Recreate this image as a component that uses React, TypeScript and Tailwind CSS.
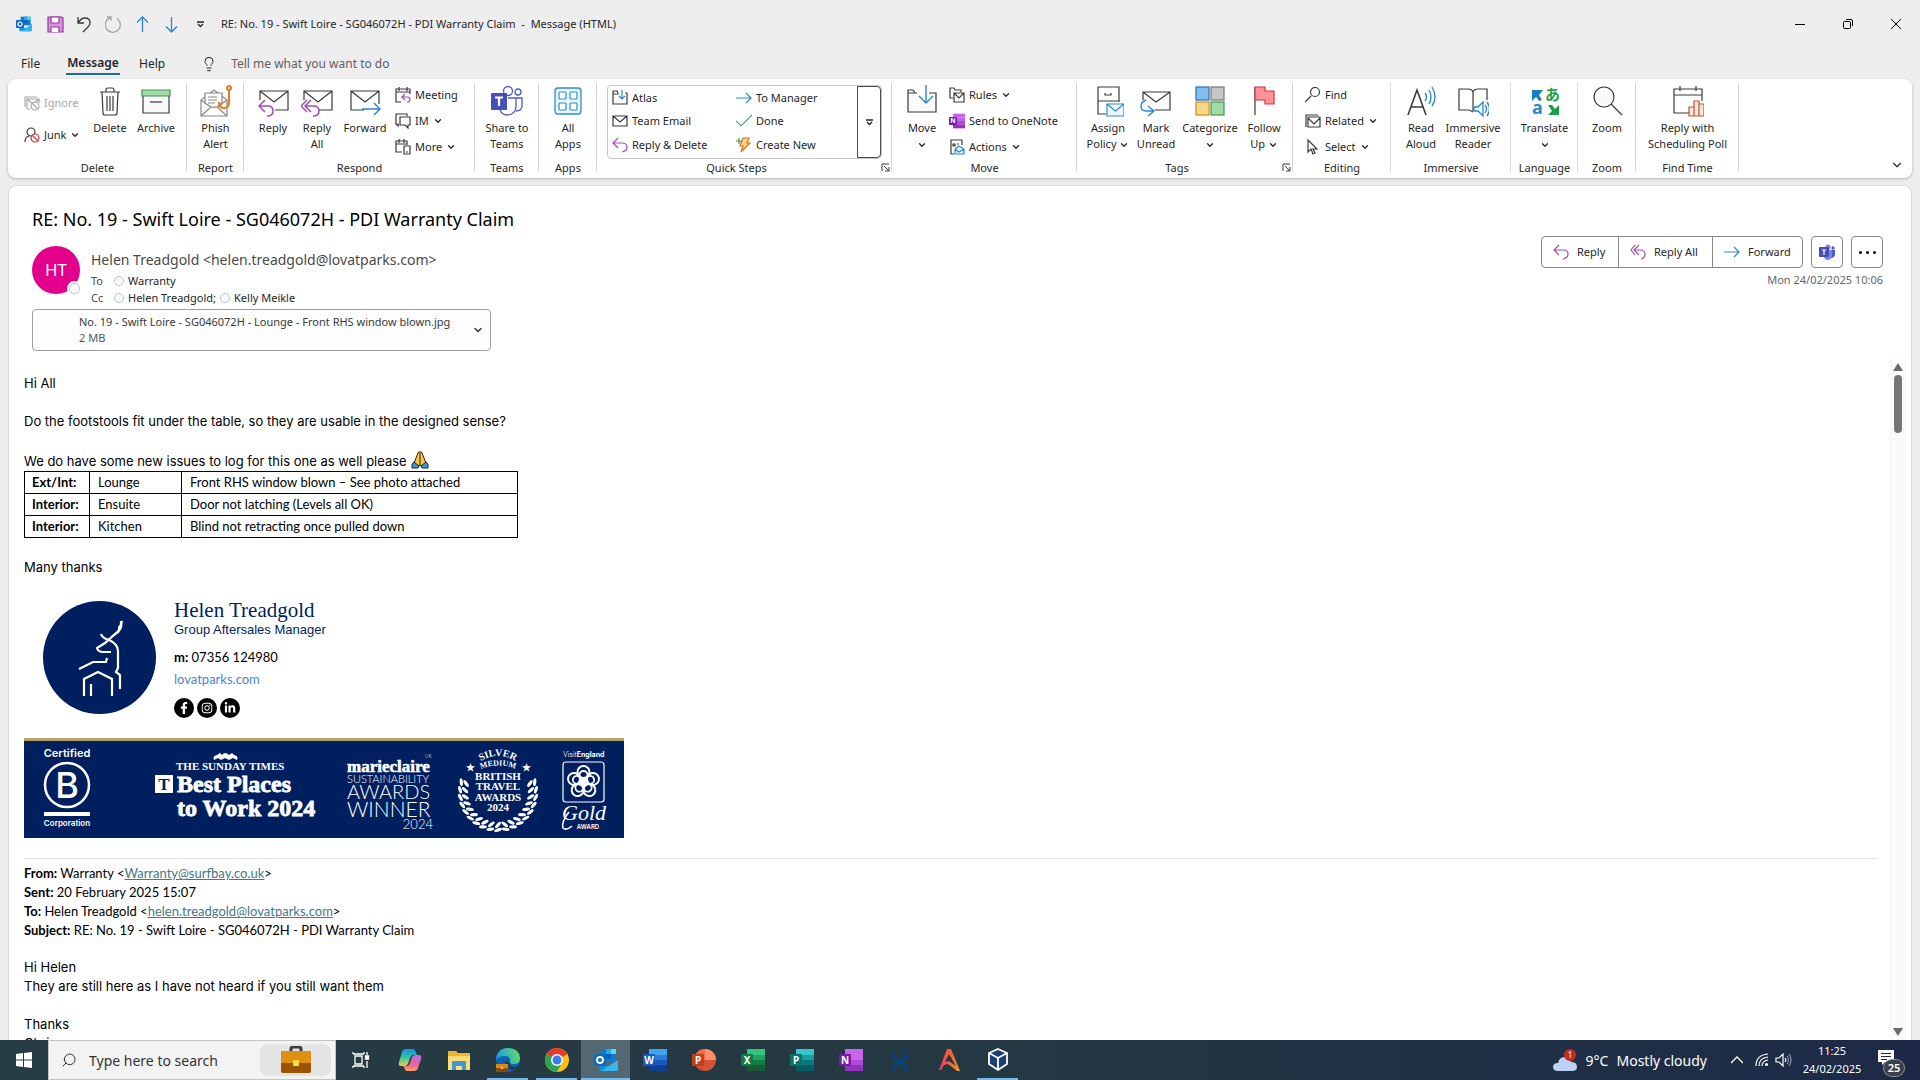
import React from 'react'
import { ChevronDown, Lightbulb, Search } from 'lucide-react'
import { FaFacebookF, FaInstagram, FaLinkedinIn } from 'react-icons/fa'

type IconProps = { className?: string }

const INK = "#3b3a39"
const BLUE = "#2b88d0"
const PURPLE = "#a04fae"

/* ---------- shared icon helpers ---------- */

function Svg({ size = 32, children, className = "" }: { size?: number; children: React.ReactNode; className?: string }) {
  return (
    <svg width={size} height={size} viewBox={`0 0 ${size} ${size}`} fill="none" stroke={INK} strokeWidth="1.2" className={`shrink-0 ${className}`} aria-hidden="true">
      {children}
    </svg>
  )
}

function Caret() {
  return <ChevronDown className="w-2.5 h-2.5 inline-block shrink-0" strokeWidth={3} />
}

const TrashIcon = () => (
  <Svg>
    <path d="M6 7h20M12 7V5q0-2 2-2h4q2 0 2 2v2M8 7l1 21q0 2 2 2h10q2 0 2-2l1-21M13 11v15M16 11v15M19 11v15" />
  </Svg>
)

const ArchiveIcon = () => (
  <Svg>
    <path d="M3 10v18h26V10" fill="#fafafa" />
    <path d="M2 5h28v6H2z" fill="#a3dba8" stroke="#3f8f55" />
    <path d="M10 17h12" />
  </Svg>
)

const PhishIcon = () => (
  <Svg>
    <g stroke="#8a8886">
      <path d="M1 15v16h26V15L14 5zM1 31l10-9h6l10 9M1 15l10 7M27 15l-10 7" fill="#fafafa" />
      <path d="M5 18V8h17v10l-5 4h-6z" fill="#fff" />
      <path d="M8 12h9M8 15h9M8 18h7" />
    </g>
    <circle cx="29" cy="3" r="2" stroke="#ee7623" strokeWidth="2" />
    <path d="M29 5v12q0 6-5 6t-5-5l3 2" stroke="#ee7623" strokeWidth="2" />
  </Svg>
)

const ReplyIcon = ({ all = false }: { all?: boolean }) => (
  <Svg>
    <path d="M3 15V6h28v19H18M3 6l14 11L31 6" />
    <path d={all ? "M10 15l-6 6 6 6M6 15l-6 6 6 6M4 21h8q6 0 6 5t-6 5" : "M8 15l-6 6 6 6M2 21h9q5 0 5 5t-6 5"} stroke={PURPLE} strokeWidth="1.5" />
  </Svg>
)

const ForwardIcon = () => (
  <Svg>
    <path d="M15 25H2V6h28v13M2 6l14 11L30 6" />
    <path d="M13 24h18M25 18l6 6-6 6" stroke={BLUE} strokeWidth="1.5" />
  </Svg>
)

const TeamsOutlineIcon = () => (
  <Svg>
    <g stroke="#5059c9" strokeWidth="1.3">
      <circle cx="17" cy="6" r="4.500" />
      <circle cx="27" cy="7" r="3" />
      <path d="M17 13h8v9q-1 8-9 8-5 0-7-5M25 13h6v8q0 5-6 5" />
    </g>
    <rect x="0" y="8" width="16" height="17" rx="1" fill="#464eb8" stroke="none" />
    <path d="M4 12.500h8M8 12.500V21" stroke="#fff" strokeWidth="2.200" />
  </Svg>
)

const AppsIcon = () => (
  <Svg>
    <rect x="3" y="3" width="26" height="26" rx="3" fill="#e8f4fc" stroke="#2f8fc5" strokeWidth="1.300" />
    {[[7, 7], [18, 7], [7, 18], [18, 18]].map(([x, y]) => (
      <rect key={`${x}-${y}`} x={x} y={y} width="7" height="7" rx="1" fill="#fff" stroke="#2f8fc5" />
    ))}
  </Svg>
)

const MoveIcon = () => (
  <Svg>
    <path d="M11 8h-2L7 5H2v22h28V8h-7M2 8h8" fill="#fafafa" />
    <path d="M20 0v18M13 11l7 7 7-7" stroke={BLUE} strokeWidth="1.400" />
  </Svg>
)

const PolicyIcon = () => (
  <Svg>
    <path d="M14 29H6V2h21v15M6 16h21M13 8v2h6V8" />
    <path d="M15 19h17v12H15zM15 19l8.500 7 8.500-7" fill="#eef7fd" stroke={BLUE} />
  </Svg>
)

const UnreadIcon = () => (
  <Svg>
    <path d="M3 15V7h27v18H15M3 7l13 10L30 7" fill="#fafafa" />
    <path d="M6 15q-5 2-5 6 0 5 5 5h7M8 21l6 5-6 5" stroke={BLUE} strokeWidth="1.400" fill="#fff" />
  </Svg>
)

const CategorizeIcon = () => (
  <Svg>
    <rect x="2" y="2" width="13" height="13" fill="#83beec" stroke="#2472b8" />
    <rect x="17" y="2" width="13" height="13" fill="#c8c6c4" stroke="#797775" />
    <rect x="2" y="17" width="13" height="13" fill="#ffd98a" stroke="#d08a1c" />
    <rect x="17" y="17" width="13" height="13" fill="#a3dba8" stroke="#3f9a55" />
  </Svg>
)

const FlagIcon = () => (
  <Svg>
    <path d="M7 2v28" />
    <path d="M7 2h10v4h9v13H17v-4H7z" fill="#ff9199" stroke="#d13438" />
  </Svg>
)

const ReadAloudIcon = () => (
  <Svg>
    <path d="M3 30L12 5l9 25M6 22h12" strokeWidth="1.600" />
    <path d="M20 8q3 4 0 8M24 5q4 7 0 14M27 2q6 10 0 19" stroke={BLUE} strokeWidth="1.400" />
  </Svg>
)

const ReaderIcon = () => (
  <Svg>
    <path d="M16 27q-3-2-5-2H2V4h9q4 0 5 3v19M16 7q1-3 5-3h9v11" />
    <path d="M17 22h4l5-5v14l-5-5h-4zM28 20q3 4 0 8M30 17q5 7 0 14" stroke={BLUE} strokeWidth="1.300" fill="#eef7fd" />
  </Svg>
)

const TranslateIcon = () => (
  <Svg className="overflow-visible">
    <g stroke="none">
      <path d="M3 5h11l-4 5 3 5-3 1-3-4-4 4z" fill="#1b7fc4" />
      <path d="M30 30H19l4-4-4-6h4l3 4 4-4z" fill="#1e9e4a" />
      <text x="3" y="29" fontSize="18" fontWeight="700" fill="#2b88d0" fontFamily="Noto Sans, sans-serif">a</text>
      <text x="16" y="15" fontSize="15" fontWeight="700" fill="#1e9e4a" fontFamily="Noto Sans CJK JP, sans-serif">あ</text>
    </g>
  </Svg>
)

const ZoomIcon = () => (
  <Svg>
    <circle cx="13" cy="12" r="10" fill="#fafafa" />
    <path d="M20 19l11 11" />
  </Svg>
)

const PollIcon = () => (
  <Svg>
    <path d="M17 28H2V4h28v12M2 10h28M8 1v5M24 1v5" />
    <path d="M17 22h5v9h-5zM22 16h5v15h-5zM27 19h5v12h-5z" fill="#fde7dc" stroke="#c8502a" />
  </Svg>
)

/* small 16px icons */

const IgnoreIcon = () => (
  <Svg size={16}>
    <g stroke="#a8a8a8">
      <path d="M1 12V2h12M3 14V4h12v4M3 4l6 5 6-5M3 14h3" />
      <circle cx="11" cy="11" r="4" fill="#fff" />
      <path d="M8 8l6 6" />
    </g>
  </Svg>
)

const JunkIcon = () => (
  <Svg size={16}>
    <circle cx="7" cy="5" r="4" />
    <path d="M1 15q0-5 4-6" />
    <circle cx="11" cy="11" r="4" fill="#fff" stroke="#d13438" />
    <path d="M8 8l6 6" stroke="#d13438" />
  </Svg>
)

const MeetingIcon = () => (
  <Svg size={16}>
    <path d="M6 15H1V2h14v5M1 5h14M4 0v4M12 0v4" />
    <path d="M10 7l-3 3 3 3M7 10h5q3 0 3 2.500T12 15" stroke={PURPLE} />
  </Svg>
)

const ImIcon = () => (
  <Svg size={16}>
    <path d="M4 11H3v2l-2-2V1h11v2M5 4h10v8h-2v3l-3-3H5z" />
  </Svg>
)

const MoreIcon = () => (
  <Svg size={16}>
    <path d="M7 13H1V2h11v4M1 5h11M4 0v4M9 0v4M9 7h6v8H9zM11 13h2" />
  </Svg>
)

const FolderDownIcon = () => (
  <Svg size={16}>
    <path d="M6 3L5 1H1v13h14V3h-2M1 4h6" />
    <path d="M10 0v9M7 6l3 3 3-3" stroke={BLUE} />
  </Svg>
)

const EnvelopeIcon = () => (
  <Svg size={16}>
    <path d="M1 3h14v10H1zM1 3l7 6 7-6" />
  </Svg>
)

const SmallReply = () => (
  <Svg size={16}>
    <path d="M6 1L1 6l5 5M1 6h9q5 0 5 4t-5 5" stroke={PURPLE} />
  </Svg>
)

const SmallReplyAll = () => (
  <Svg size={16}>
    <path d="M5 1L1 6l4 5M9 1L4 6l5 5M4 6h6q5 0 5 4t-4 5" stroke={PURPLE} />
  </Svg>
)

const ArrowRight = () => (
  <Svg size={16}>
    <path d="M0 8h15M10 3l5 5-5 5" stroke={BLUE} />
  </Svg>
)

const DoneIcon = () => (
  <Svg size={16}>
    <path d="M0 8l5 5L16 2" stroke="#4fa566" />
  </Svg>
)

const BoltIcon = () => (
  <Svg size={16}>
    <path d="M7 1h6l-2 5h3L5 15l2-6H4z" fill="#ffd08a" stroke="#d8731c" />
    <path d="M0 4h6M3 1v6" stroke="#3f9a55" />
  </Svg>
)

const RulesIcon = () => (
  <Svg size={16}>
    <path d="M4 11H1V1h4l1 2h6v2M5 6h10v9H5zM5 6l5 5 5-5" />
  </Svg>
)

const ActionsIcon = () => (
  <Svg size={16}>
    <path d="M5 15H2V1h11v5M4 5h2v2H4zM8 5h2" />
    <path d="M6 10l4-3 5 3v5H6zM6 10l4 3 5-3" stroke={BLUE} fill="#e6f3fc" />
  </Svg>
)

const FindIcon = () => (
  <Svg size={16}>
    <circle cx="10" cy="5" r="4.500" />
    <path d="M6 9l-6 6" />
  </Svg>
)

const RelatedIcon = () => (
  <Svg size={16}>
    <path d="M1 14V2h12M3 4h12v10H3zM3 5l6 6 6-6" />
  </Svg>
)

const SelectIcon = () => (
  <Svg size={16}>
    <path d="M3 1v12l3-3 2 5 2-1-2-4h4z" />
  </Svg>
)

/* ---------- Office tile used in the ribbon and the taskbar ---------- */

const tilePalettes = {
  W: ["#41a5ee", "#2b7cd3", "#185abd", "#103f91", "#185abd"],
  X: ["#33c481", "#21a366", "#107c41", "#185c37", "#107c41"],
  P: ["#37c6d0", "#1a9ba1", "#08777e", "#055c61", "#077568"],
  N: ["#ca64ea", "#ca64ea", "#ae4bd5", "#9332bf", "#7719aa"],
}

function OfficeTile({ letter, className = "w-6 h-6" }: { letter: "W" | "X" | "P" | "N"; className?: string }) {
  const [a, b, c, d, front] = tilePalettes[letter]
  return (
    <svg viewBox="0 0 24 24" className={`shrink-0 ${className}`} aria-hidden="true">
      <path d="M6 1h18v6H6z" fill={a} />
      <path d="M6 7h18v5H6z" fill={b} />
      <path d="M6 12h18v5H6z" fill={c} />
      <path d="M6 17h18v6H6z" fill={d} />
      <rect x="0" y="6" width="12" height="12" rx="1" fill={front} />
      <text x="6" y="15.500" textAnchor="middle" fontSize="10" fontWeight="700" fill="#fff" fontFamily="Noto Sans, sans-serif">{letter}</text>
    </svg>
  )
}

function OutlookTile({ className = "w-6 h-6" }: IconProps) {
  return (
    <svg viewBox="0 0 24 24" className={`shrink-0 ${className}`} aria-hidden="true">
      <path d="M7 1h15v13H7z" fill="#0f78d4" />
      <path d="M12 1h5v5h-5z" fill="#28a8ea" />
      <path d="M17 1h5v5h-5z" fill="#50d9ff" />
      <path d="M12 6h5v5h-5z" fill="#0364b8" />
      <path d="M5 12l10 7 9-7v9q0 2-2 2H7q-2 0-2-2z" fill="#1490df" />
      <path d="M24 12L7 23h15q2 0 2-2z" fill="#35b8f1" />
      <rect x="0" y="6" width="12" height="12" rx="1" fill="#0f6cbd" />
      <circle cx="6" cy="12" r="3" fill="none" stroke="#fff" strokeWidth="1.800" />
    </svg>
  )
}

function TeamsTile() {
  return (
    <svg viewBox="0 0 16 16" className="w-4 h-4" aria-hidden="true">
      <circle cx="9" cy="3" r="2.500" fill="#7b83eb" />
      <circle cx="14" cy="4" r="1.700" fill="#5059c9" />
      <path d="M11 6h5v5q-1 3-4 3z" fill="#5059c9" />
      <path d="M5 6h8v6q-1 4-4 4-4 0-4-4z" fill="#7b83eb" />
      <rect x="0" y="3" width="10" height="10" rx="1" fill="#464eb8" />
      <path d="M3 6h4M5 6v5" stroke="#fff" strokeWidth="1.200" />
    </svg>
  )
}

/* ---------- ribbon ---------- */

function Group({ label, className, children, launcher = false }: { label: string; className: string; children: React.ReactNode; launcher?: boolean }) {
  return (
    <section className={`relative flex flex-col shrink-0 ${className}`}>
      <div className="flex h-[81px] pt-1.5">{children}</div>
      <h2 className={`text-center leading-4 ${launcher ? "pr-4" : ""}`}>{label}</h2>
      {launcher && (
        <button aria-label={`${label} options`} className="absolute right-0.5 bottom-1.5">
          <svg width="9" height="9" viewBox="0 0 9 9" fill="none" stroke={INK} aria-hidden="true">
            <path d="M1 8V1h7M3 3l5 5M8 4v4H4" />
          </svg>
        </button>
      )}
      <span className="absolute right-0 top-1 bottom-1.5 w-px bg-[#d6d6d6]" />
    </section>
  )
}

function BigButton({ icon, lines, caret = false, className = "w-11" }: { icon: React.ReactNode; lines: string[]; caret?: boolean; className?: string }) {
  return (
    <button className={`flex flex-col items-center shrink-0 h-[72px] ${className}`}>
      {icon}
      <span className="mt-[3px] leading-4 whitespace-nowrap text-center">
        {lines[0]}
        <br />
        {lines[1]}
        {caret && <> <Caret /></>}
      </span>
    </button>
  )
}

function SmallButton({ icon, text, caret = false, disabled = false }: { icon: React.ReactNode; text: string; caret?: boolean; disabled?: boolean }) {
  return (
    <button disabled={disabled} className="flex items-center gap-1 h-5 leading-5 whitespace-nowrap disabled:text-[#a8a8a8]">
      {icon} {text} {caret && <Caret />}
    </button>
  )
}

const quickSteps = [
  { text: "Atlas", icon: <FolderDownIcon /> },
  { text: "To Manager", icon: <ArrowRight /> },
  { text: "Team Email", icon: <EnvelopeIcon /> },
  { text: "Done", icon: <DoneIcon /> },
  { text: "Reply & Delete", icon: <SmallReply /> },
  { text: "Create New", icon: <BoltIcon /> },
]

function MenuGlyph() {
  return (
    <svg width="9" height="7" viewBox="0 0 9 7" fill="none" stroke="currentColor" strokeWidth="1.300" aria-hidden="true">
      <path d="M1 1h7M2 3l2.500 2.500L7 3" />
    </svg>
  )
}

function Ribbon() {
  return (
    <div className="mx-2 flex rounded-lg bg-white h-[99px] shadow-[0_1px_3px_rgba(0,0,0,0.25)] text-[11px] text-[#262626]">
      <Group label="Delete" className="w-[179px]">
        <div className="flex flex-col gap-3 pl-4 pt-2 w-20">
          <SmallButton icon={<IgnoreIcon />} text="Ignore" disabled />
          <SmallButton icon={<JunkIcon />} text="Junk" caret />
        </div>
        <BigButton icon={<TrashIcon />} lines={["Delete"]} />
        <BigButton icon={<ArchiveIcon />} lines={["Archive"]} className="w-12" />
      </Group>
      <Group label="Report" className="w-[57px]">
        <BigButton icon={<PhishIcon />} lines={["Phish", "Alert"]} className="w-full" />
      </Group>
      <Group label="Respond" className="w-[231px]">
        <div className="flex pl-[7px]">
          <BigButton icon={<ReplyIcon />} lines={["Reply"]} />
          <BigButton icon={<ReplyIcon all />} lines={["Reply", "All"]} />
          <BigButton icon={<ForwardIcon />} lines={["Forward"]} className="w-13" />
        </div>
        <div className="flex flex-col gap-1.5 pl-1">
          <SmallButton icon={<MeetingIcon />} text="Meeting" />
          <SmallButton icon={<ImIcon />} text="IM" caret />
          <SmallButton icon={<MoreIcon />} text="More" caret />
        </div>
      </Group>
      <Group label="Teams" className="w-16">
        <BigButton icon={<TeamsOutlineIcon />} lines={["Share to", "Teams"]} className="w-full" />
      </Group>
      <Group label="Apps" className="w-[58px]">
        <BigButton icon={<AppsIcon />} lines={["All", "Apps"]} className="w-full" />
      </Group>
      <Group label="Quick Steps" className="w-[295px]" launcher>
        <div className="ml-2.5 flex w-[275px] h-[74px] rounded border border-[#c8c6c4]">
          <div className="grid grid-cols-[124px_1fr] flex-1 pl-1 pt-0.5">
            {quickSteps.map((step) => (
              <SmallButton key={step.text} icon={step.icon} text={step.text} />
            ))}
          </div>
          <button aria-label="More quick steps" className="flex items-center justify-center w-6 rounded-r border border-[#4a4a4a]">
            <MenuGlyph />
          </button>
        </div>
      </Group>
      <Group label="Move" className="w-[185px]">
        <div className="flex pl-2">
          <BigButton icon={<MoveIcon />} lines={["Move"]} caret />
        </div>
        <div className="flex flex-col gap-1.5 pl-[5px]">
          <SmallButton icon={<RulesIcon />} text="Rules" caret />
          <SmallButton icon={<OfficeTile letter="N" className="w-4 h-4" />} text="Send to OneNote" />
          <SmallButton icon={<ActionsIcon />} text="Actions" caret />
        </div>
      </Group>
      <Group label="Tags" className="w-[216px]" launcher>
        <div className="flex pl-[7px]">
          <BigButton icon={<PolicyIcon />} lines={["Assign", "Policy"]} caret className="w-12" />
          <BigButton icon={<UnreadIcon />} lines={["Mark", "Unread"]} className="w-12" />
          <BigButton icon={<CategorizeIcon />} lines={["Categorize"]} caret className="w-15" />
          <BigButton icon={<FlagIcon />} lines={["Follow", "Up"]} caret className="w-12" />
        </div>
      </Group>
      <Group label="Editing" className="w-[98px]">
        <div className="flex flex-col gap-1.5 pl-3">
          <SmallButton icon={<FindIcon />} text="Find" />
          <SmallButton icon={<RelatedIcon />} text="Related" caret />
          <SmallButton icon={<SelectIcon />} text="Select" caret />
        </div>
      </Group>
      <Group label="Immersive" className="w-[120px]">
        <div className="flex pl-2">
          <BigButton icon={<ReadAloudIcon />} lines={["Read", "Aloud"]} />
          <BigButton icon={<ReaderIcon />} lines={["Immersive", "Reader"]} className="w-15" />
        </div>
      </Group>
      <Group label="Language" className="w-[67px]">
        <BigButton icon={<TranslateIcon />} lines={["Translate"]} caret className="w-full" />
      </Group>
      <Group label="Zoom" className="w-[58px]">
        <BigButton icon={<ZoomIcon />} lines={["Zoom"]} className="w-full" />
      </Group>
      <Group label="Find Time" className="w-[103px]">
        <BigButton icon={<PollIcon />} lines={["Reply with", "Scheduling Poll"]} className="w-full" />
      </Group>
      <div className="flex flex-1 items-end justify-end pr-2 pb-1.5">
        <button aria-label="Collapse the ribbon">
          <ChevronDown className="w-3.5 h-3.5" />
        </button>
      </div>
    </div>
  )
}

/* ---------- title bar and tabs ---------- */

function TitleBar() {
  return (
    <header className="flex items-center h-12 pl-4 text-[#262626]">
      <OutlookTile className="w-4 h-4" />
      <div className="flex items-center gap-3 pl-[15px]">
        <button aria-label="Save">
          <svg width="17" height="17" viewBox="0 0 17 17" fill="#dd8fe0" stroke="#8f3a99" strokeWidth="1.200" aria-hidden="true">
            <path d="M1 1h14l1 1v14H1z" />
            <path d="M4 1h8v6H4zM4 16v-5h8v5" fill="#fff" />
          </svg>
        </button>
        <button aria-label="Undo">
          <svg width="17" height="17" viewBox="0 0 17 17" fill="none" stroke={INK} strokeWidth="1.300" aria-hidden="true">
            <path d="M2 1v6h6M2 7q3-5 7-5 5 0 5 5 0 2-2 4l-5 5" />
          </svg>
        </button>
        <button aria-label="Redo" disabled>
          <svg width="17" height="17" viewBox="0 0 17 17" fill="none" stroke="#a8a8a8" strokeWidth="1.300" aria-hidden="true">
            <path d="M2 1h4v4M6 1.500a7.500 7.500 0 1 0 6 1" />
          </svg>
        </button>
        <button aria-label="Previous item">
          <svg width="17" height="17" viewBox="0 0 17 17" fill="none" stroke={BLUE} strokeWidth="1.300" aria-hidden="true">
            <path d="M8.500 16V1M3 6.500L8.500 1 14 6.500" />
          </svg>
        </button>
        <button aria-label="Next item">
          <svg width="17" height="17" viewBox="0 0 17 17" fill="none" stroke={BLUE} strokeWidth="1.300" aria-hidden="true">
            <path d="M8.500 1v15M3 10.500L8.500 16l5.500-5.500" />
          </svg>
        </button>
        <button aria-label="Customise toolbar" className="pl-1">
          <MenuGlyph />
        </button>
      </div>
      <h1 className="pl-4 text-[11px] whitespace-pre">RE: No. 19 - Swift Loire - SG046072H - PDI Warranty Claim  -  Message (HTML)</h1>
      <div className="ml-auto flex">
        <button aria-label="Minimise" className="flex items-center justify-center w-12 h-12">
          <span className="w-2.5 h-px bg-black" />
        </button>
        <button aria-label="Restore" className="flex items-center justify-center w-12 h-12">
          <svg width="10" height="10" viewBox="0 0 10 10" fill="none" stroke="#000" aria-hidden="true">
            <rect x="0.500" y="2.500" width="7" height="7" rx="1" />
            <path d="M3 0.500h5q1.500 0 1.500 1.500v5" />
          </svg>
        </button>
        <button aria-label="Close" className="flex items-center justify-center w-12 h-12">
          <svg width="10" height="10" viewBox="0 0 10 10" stroke="#000" aria-hidden="true">
            <path d="M0 0l10 10M10 0L0 10" />
          </svg>
        </button>
      </div>
    </header>
  )
}

function Tabs() {
  return (
    <nav className="flex items-center h-[31px] pl-[21px] text-[12px] text-[#262626]">
      <button className="w-[45px] text-left">File</button>
      <button className="w-[54px] h-[23px] border-b-2 border-[#2268a8] font-semibold text-[12px] leading-[21px]">Message</button>
      <button className="pl-[19px]">Help</button>
      <label className="flex flex-1 items-center pl-9">
        <Lightbulb className="w-4 h-4" strokeWidth={1.500} />
        <input type="text" aria-label="Tell me what you want to do" placeholder="Tell me what you want to do" className="ml-3.5 w-60 bg-transparent outline-none placeholder:text-[#5f5f5f]" />
      </label>
    </nav>
  )
}

/* ---------- message ---------- */

function Presence() {
  return <span className="inline-block w-2.5 h-2.5 rounded-full border border-[#a9c9d4] bg-white shrink-0" />
}

function MessageHeader() {
  return (
    <div className="pl-[23px] pr-7 pt-[19px]">
      <h2 className="text-[18px] leading-7 text-black">RE: No. 19 - Swift Loire - SG046072H - PDI Warranty Claim</h2>
      <div className="flex justify-between pt-[7px]">
        <div className="flex pt-1">
          <div className="relative mt-0.5 w-12 h-12 shrink-0">
            <div className="flex items-center justify-center w-12 h-12 rounded-full bg-[#e3008c] text-white text-[17px]">HT</div>
            <span className="absolute -right-0.5 -bottom-0.5 w-[15px] h-[15px] rounded-full bg-white border-2 border-white">
              <span className="block w-full h-full rounded-full border border-[#a9c9d4]" />
            </span>
          </div>
          <div className="pl-[11px] pt-1 text-[#4a4a4a]">
            <p className="text-[14px] leading-6">Helen Treadgold &lt;helen.treadgold@lovatparks.com&gt;</p>
            <div className="text-[11px] leading-[17px]">
              <p className="flex items-center gap-1">
                <span className="w-[19px]">To</span>
                <Presence /> <span className="text-[#262626]">Warranty</span>
              </p>
              <p className="flex items-center gap-1">
                <span className="w-[19px]">Cc</span>
                <Presence /> <span className="text-[#262626]">Helen Treadgold;</span>
                <Presence /> <span className="text-[#262626]">Kelly Meikle</span>
              </p>
            </div>
          </div>
        </div>
        <div className="text-right text-[11px] -mt-1">
          <div className="flex gap-2 h-8">
            <div className="flex rounded border border-[#8a8886] divide-x divide-[#8a8886] text-[#262626]">
              <button className="flex items-center gap-2 w-[77px] pl-[11px]"><SmallReply /> Reply</button>
              <button className="flex items-center gap-2 w-[94px] pl-[11px]"><SmallReplyAll /> Reply All</button>
              <button className="flex items-center gap-2 w-[89px] pl-[11px]"><ArrowRight /> Forward</button>
            </div>
            <button aria-label="Share to Teams" className="flex items-center justify-center w-8 rounded border border-[#8a8886]"><TeamsTile /></button>
            <button aria-label="More actions" className="flex items-center justify-center gap-1 w-8 rounded border border-[#8a8886]">
              <span className="w-[3px] h-[3px] rounded-full bg-black" />
              <span className="w-[3px] h-[3px] rounded-full bg-black" />
              <span className="w-[3px] h-[3px] rounded-full bg-black" />
            </button>
          </div>
          <p className="pt-1 leading-4 text-[#666]">Mon 24/02/2025 10:06</p>
        </div>
      </div>
      <button className="mt-[3px] flex items-center w-[459px] h-[42px] rounded border border-[#a19f9d] bg-[#fdfdfd] pl-[46px] text-left text-[11px] leading-4 text-[#3b3a39]">
        <span className="flex-1 whitespace-nowrap">
          No. 19 - Swift Loire - SG046072H - Lounge - Front RHS window blown.jpg
          <br />
          <span className="text-[#555]">2 MB</span>
        </span>
        <ChevronDown className="w-3 h-3 mr-1.5" strokeWidth={3} />
      </button>
    </div>
  )
}

const issues = [
  { place: "Ext/Int:", room: "Lounge", note: "Front RHS window blown – See photo attached" },
  { place: "Interior:", room: "Ensuite", note: "Door not latching (Levels all OK)" },
  { place: "Interior:", room: "Kitchen", note: "Blind not retracting once pulled down" },
]

function PrayIcon() {
  return (
    <svg width="18" height="18" viewBox="0 0 18 18" className="inline-block align-text-bottom ml-1" role="img" aria-label="Folded hands">
      <path d="M8 1q-1 0-1 1L3 12l3 4 3-2 3 2 3-4-4-10q0-1-1-1z" fill="#ffc83d" stroke="#222" />
      <path d="M9 2v12" stroke="#222" />
      <path d="M3 11l5 4-1 2H1v-4zM15 11l-5 4 1 2h6v-4z" fill="#3a95d8" stroke="#222" />
    </svg>
  )
}

function StagLogo() {
  return (
    <svg width="113" height="113" viewBox="0 0 113 113" role="img" aria-label="Lovat Parks" className="shrink-0">
      <circle cx="56.500" cy="56.500" r="56.500" fill="#001f5f" />
      <g fill="none" stroke="#fff" strokeWidth="2.200">
        <path d="M78 20q1 9-7 14l-9 8-8 5q1 4 6 4h8" />
        <path d="M58 33q1 4 8 6 9 4 9 11v17l-2 4 4 3v14" />
        <path d="M64 57l-1 4H50l-14 7" />
        <path d="M41 95V78l14-7 14 7v17M48 83v12" />
      </g>
      <path d="M75 26l5-7-1 8-4 6z" fill="#fff" />
    </svg>
  )
}

/* laurel leaves run round the lower part of the circle */
const laurel = Array.from({ length: 19 }, (_, i) => -15 + i * (210 / 18))

function AwardsBanner() {
  return (
    <svg viewBox="0 0 600 100" width="600" height="100" fill="#fff" role="img" aria-label="Awards" className="block">
      <rect width="600" height="100" fill="#001f5f" />
      <rect width="600" height="3" fill="#b3a36a" />
      <g fontFamily="Inter, sans-serif" fontWeight="600" fontSize="11" textAnchor="middle">
        <text x="43" y="19">Certified</text>
        <text x="43" y="88" fontSize="8">Corporation</text>
      </g>
      <circle cx="43" cy="47" r="22" fill="none" stroke="#fff" strokeWidth="2.500" />
      <text x="43" y="60" textAnchor="middle" fontFamily="Inter, sans-serif" fontSize="36" fontWeight="500">B</text>
      <rect x="20" y="74" width="46" height="4" />

      <path d="M190 22q-2-4 3-5l3-2 2 2q3-4 7 0l3-2 2 2q5 1 3 5l-4-2-4 2-4-2-4 2-3-2z" />
      <g fontFamily="Liberation Serif, serif" fontWeight="700">
        <text x="152" y="32" fontSize="11">THE SUNDAY TIMES</text>
        <rect x="131" y="37" width="18" height="18" />
        <text x="140" y="52" fontSize="17" textAnchor="middle" fill="#001f5f">T</text>
        <text x="153" y="54" fontSize="24" stroke="#fff" strokeWidth="0.800">Best Places</text>
        <text x="153" y="78" fontSize="24" stroke="#fff" strokeWidth="0.800">to Work 2024</text>
        <text x="323" y="34" fontSize="17" stroke="#fff" strokeWidth="0.500">marieclaire</text>
      </g>
      <g fontFamily="Lato, sans-serif" fontWeight="300">
        <text x="401" y="20" fontSize="5">UK</text>
        <text x="323" y="45" fontSize="11">SUSTAINABILITY</text>
        <text x="323" y="61" fontSize="20">AWARDS</text>
        <text x="323" y="79" fontSize="21">WINNER</text>
        <text x="409" y="91" fontSize="13" textAnchor="end">2024</text>
      </g>

      <path id="silver-arc" d="M451 27q23-18 46 0" fill="none" />
      <path id="medium-arc" d="M454 32q20-9 40 0" fill="none" />
      <g fontFamily="Liberation Serif, serif" fontWeight="700" textAnchor="middle" fontSize="10">
        <text fontSize="10"><textPath href="#silver-arc" startOffset="50%">SILVER</textPath></text>
        <text fontSize="8"><textPath href="#medium-arc" startOffset="50%">MEDIUM</textPath></text>
        <text x="446" y="33">★</text>
        <text x="502" y="33">★</text>
        <text x="474" y="42" fontSize="11">BRITISH</text>
        <text x="474" y="52" fontSize="11">TRAVEL</text>
        <text x="474" y="63" fontSize="11">AWARDS</text>
        <text x="474" y="73" fontSize="11">2024</text>
      </g>
      {laurel.map((a) => (
        <g key={a} transform={`translate(474 54) rotate(${a})`}>
          <ellipse cx="33" cy="0" rx="4" ry="1.600" transform={`rotate(${a < 90 ? -40 : 40} 33 0)`} />
          <ellipse cx="38" cy="0" rx="4" ry="1.600" transform={`rotate(${a < 90 ? -70 : 70} 38 0)`} />
        </g>
      ))}

      <text x="539" y="19" fontFamily="Inter, sans-serif" fontSize="7" fontWeight="300">Visit<tspan fontWeight="700">England</tspan></text>
      <rect x="539" y="24" width="41" height="40" rx="3" fill="none" stroke="#fff" strokeWidth="1.200" />
      {[0, 72, 144, 216, 288].map((a) => (
        <g key={a} transform={`rotate(${a} 559.5 44)`} stroke="#fff" fill="none">
          <circle cx="559.500" cy="34" r="6" strokeWidth="2" />
          <circle cx="559.500" cy="37" r="4" strokeWidth="1.800" />
        </g>
      ))}
      <circle cx="559.500" cy="44" r="3" />
      <text x="560" y="82" textAnchor="middle" fontFamily="Liberation Serif, serif" fontStyle="italic" fontSize="22">Gold</text>
      <path d="M545 74q-8 10-6 16 3 3 9-2" fill="none" stroke="#fff" strokeWidth="1.500" />
      <text x="564" y="91" textAnchor="middle" fontFamily="Inter, sans-serif" fontSize="6" fontWeight="600">AWARD</text>
    </svg>
  )
}

function Signature() {
  return (
    <div className="flex pt-6 pl-[19px]">
      <StagLogo />
      <div className="pl-[18px] text-[#001f5f]">
        <p className="font-['Liberation_Serif',serif] text-[21px] leading-[18px]">Helen Treadgold</p>
        <p className="pt-[3px] font-['Liberation_Sans',sans-serif] text-[13px] leading-4">Group Aftersales Manager</p>
        <p className="pt-2 font-[Lato,sans-serif] text-[13px] leading-[22px] text-black"><b>m:</b> 07356 124980</p>
        <p className="font-[Lato,sans-serif] text-[13px] leading-[22px]">
          <a href="#lovatparks" className="text-[#4a86d8]">lovatparks.com</a>
        </p>
        <div className="flex gap-[3px] pt-2 text-white">
          <a href="#facebook" aria-label="Facebook" className="flex items-center justify-center w-5 h-5 rounded-full bg-black"><FaFacebookF className="w-3 h-3" /></a>
          <a href="#instagram" aria-label="Instagram" className="flex items-center justify-center w-5 h-5 rounded-full bg-black"><FaInstagram className="w-3 h-3" /></a>
          <a href="#linkedin" aria-label="LinkedIn" className="flex items-center justify-center w-5 h-5 rounded-full bg-black"><FaLinkedinIn className="w-3 h-3" /></a>
        </div>
      </div>
    </div>
  )
}

function MessageBody() {
  return (
    <article className="flex-1 overflow-hidden pt-[15px] pl-[15px] pr-[11px] font-[Inter,sans-serif] text-[13px] leading-[19px] text-black">
      <p>Hi All</p>
      <p className="pt-[19px]">Do the footstools fit under the table, so they are usable in the designed sense?</p>
      <p className="pt-5 h-10">We do have some new issues to log for this one as well please<PrayIcon /></p>
      <table className="border-collapse w-[494px] font-[Lato,sans-serif] text-[13px] leading-[21px]">
        <tbody>
          {issues.map((row) => (
            <tr key={row.note}>
              <th scope="row" className="border border-black w-[65px] pl-[7px] text-left">{row.place}</th>
              <td className="border border-black w-[92px] pl-2">{row.room}</td>
              <td className="border border-black pl-2">{row.note}</td>
            </tr>
          ))}
        </tbody>
      </table>
      <p className="pt-5">Many thanks</p>
      <Signature />
      <div className="pt-5"><AwardsBanner /></div>
      <hr className="mt-5 border-[#e1e1e1]" />
      <div className="pt-[5px] font-[Lato,sans-serif] text-[13px]">
        <p><b>From:</b> Warranty &lt;<a href="#warranty" className="underline text-[#467886]">Warranty@surfbay.co.uk</a>&gt;</p>
        <p><b>Sent:</b> 20 February 2025 15:07</p>
        <p><b>To:</b> Helen Treadgold &lt;<a href="#helen" className="underline text-[#467886]">helen.treadgold@lovatparks.com</a>&gt;</p>
        <p><b>Subject:</b> RE: No. 19 - Swift Loire - SG046072H - PDI Warranty Claim</p>
      </div>
      <p className="pt-[18px]">Hi Helen</p>
      <p>They are still here as I have not heard if you still want them</p>
      <p className="pt-[19px]">Thanks</p>
      <p>Chris</p>
    </article>
  )
}

function ScrollBar() {
  return (
    <div className="flex flex-col items-center w-[17px] mr-[5px] py-1 rounded bg-[#fafafa]">
      <svg width="10" height="8" viewBox="0 0 10 8" className="shrink-0" aria-hidden="true"><path d="M5 0l5 8H0z" fill="#6b6b6b" /></svg>
      <span className="mt-1 w-2 h-[58px] shrink-0 rounded-full bg-[#767676]" />
      <svg width="10" height="8" viewBox="0 0 10 8" className="mt-auto shrink-0" aria-hidden="true"><path d="M5 8l5-8H0z" fill="#6b6b6b" /></svg>
    </div>
  )
}

/* ---------- taskbar ---------- */

const BriefcaseArt = ({ className = "" }: IconProps) => (
  <svg viewBox="0 0 32 28" className={className} aria-hidden="true">
    <path d="M11 6V3q0-2 2-2h6q2 0 2 2v3" fill="none" stroke="#3b3b3b" strokeWidth="3" />
    <rect x="1" y="5" width="30" height="22" rx="2" fill="#9a5400" />
    <path d="M1 7q0-2 2-2h26q2 0 2 2v10H1z" fill="#e08f10" />
    <rect x="13" y="14" width="6" height="6" rx="1" fill="#ffd84a" />
  </svg>
)

const CopilotIcon = () => (
  <svg viewBox="0 0 24 24" className="w-6 h-6" aria-hidden="true">
    <defs>
      <linearGradient id="cop-a" x1="0" y1="0" x2="0" y2="1"><stop offset="0" stopColor="#1b8fe8" /><stop offset="0.500" stopColor="#35c3a0" /><stop offset="1" stopColor="#e8d23c" /></linearGradient>
      <linearGradient id="cop-b" x1="0" y1="0" x2="0" y2="1"><stop offset="0" stopColor="#b66cf0" /><stop offset="0.600" stopColor="#f0609a" /><stop offset="1" stopColor="#f8a45c" /></linearGradient>
    </defs>
    <path d="M8 1h7q2 0 3 4l1 2h-4q-2 0-3 3l-2 6q-1 2-4 2H3q-3 0-2-4L4 4q1-3 4-3z" fill="url(#cop-a)" />
    <path d="M16 23H9q-2 0-3-4l-1-1h4q2 0 3-3l2-6q1-2 4-2h3q3 0 2 4l-3 9q-1 3-4 3z" fill="url(#cop-b)" />
  </svg>
)

const ExplorerIcon = () => (
  <svg viewBox="0 0 24 24" className="w-6 h-6" aria-hidden="true">
    <path d="M1 3h8l2 2h12v17H1z" fill="#f0b429" />
    <path d="M1 8h22v14H1z" fill="#ffdc74" />
    <path d="M5 22v-8q0-1 1-1h12q1 0 1 1v8h-4v-4H9v4z" fill="#3c97dc" />
  </svg>
)

const EdgeIcon = () => (
  <svg viewBox="0 0 26 26" className="w-[26px] h-[26px]" aria-hidden="true">
    <defs>
      <linearGradient id="edge-g" x1="0" y1="0.500" x2="1" y2="0.300"><stop offset="0" stopColor="#1b9be0" /><stop offset="1" stopColor="#5fdc6a" /></linearGradient>
    </defs>
    <circle cx="13" cy="13" r="12" fill="#0f62b8" />
    <path d="M1 13Q2 1 13 1t12 10q0 6-6 6-4 0-4-2 1-6-5-6-6 0-9 4z" fill="url(#edge-g)" />
    <path d="M10 14q0 8 8 9 4-1 6-4-10 3-10-4z" fill="#263b44" />
    <path d="M1 17h12v8H1z" fill="#d98a1a" />
    <path d="M1 21h12v4H1z" fill="#8e4b04" />
    <path d="M6 20h2v2H6z" fill="#ffd84a" />
  </svg>
)

const ChromeIcon = () => (
  <svg viewBox="0 0 24 24" className="w-6 h-6" aria-hidden="true">
    <circle cx="12" cy="12" r="12" fill="#fbc116" />
    <path d="M12 12L1.600 6A12 12 0 0 1 22.400 6z" fill="#e33b2e" />
    <path d="M12 12L1.600 6A12 12 0 0 0 12 24l5-9z" fill="#2da44e" />
    <circle cx="12" cy="12" r="6" fill="#fff" />
    <circle cx="12" cy="12" r="4.500" fill="#3f7de8" />
  </svg>
)

const PowerPointIcon = () => (
  <svg viewBox="0 0 24 24" className="w-6 h-6" aria-hidden="true">
    <circle cx="13" cy="12" r="11" fill="#d35230" />
    <path d="M13 1a11 11 0 0 1 11 11H13z" fill="#ff8f6b" />
    <path d="M13 1a11 11 0 0 0-11 11h11z" fill="#ed6c47" />
    <rect x="0" y="6" width="12" height="12" rx="1" fill="#c43e1c" />
    <text x="6" y="15.500" textAnchor="middle" fontSize="10" fontWeight="700" fill="#fff" fontFamily="Noto Sans, sans-serif">P</text>
  </svg>
)

const FigureIcon = () => (
  <svg viewBox="0 0 24 24" className="w-6 h-6" fill="none" stroke="#123f73" strokeWidth="4" aria-hidden="true">
    <path d="M4 7l8 7 8-7M6 23q0-7 6-9 6 2 6 9" />
    <path d="M4 3h2M11 2h2M18 3h2" strokeWidth="3" />
  </svg>
)

const RedAIcon = () => (
  <svg viewBox="0 0 24 24" className="w-6 h-6" aria-hidden="true">
    <defs>
      <linearGradient id="red-a" x1="0" y1="0" x2="1" y2="0"><stop offset="0" stopColor="#e83e6c" /><stop offset="0.600" stopColor="#f2662c" /><stop offset="1" stopColor="#f5a12c" /></linearGradient>
    </defs>
    <path d="M10 1h4l9 22h-3l-9-7-4 1-3 5H2zM12 6L8 14l4-1 7 5z" fillRule="evenodd" fill="url(#red-a)" />
  </svg>
)

const BoxIcon = () => (
  <svg viewBox="0 0 24 24" className="w-6 h-6" fill="#1c3f70" stroke="#fff" strokeWidth="1.800" aria-hidden="true">
    <path d="M12 1l9 4v11l-9 6-9-6V5z" />
    <path d="M3 5l9 5 9-5M12 10v12" />
  </svg>
)

const TaskViewIcon = () => (
  <svg viewBox="0 0 18 18" className="w-[18px] h-[18px]" fill="none" stroke="#fff" strokeWidth="1.300" aria-hidden="true">
    <path d="M1 3h11M1 15h11M3 5h7v8H3zM15 1v3M15 10v7" />
    <path d="M13.500 5h3v3h-3z" fill="#fff" />
    <path d="M1 1v2M12 1v2M1 15v2M12 15v2" />
  </svg>
)

const pinned = [
  { name: "Task View", icon: <TaskViewIcon /> },
  { name: "Copilot", icon: <CopilotIcon /> },
  { name: "File Explorer", icon: <ExplorerIcon /> },
  { name: "Edge", icon: <EdgeIcon />, open: true },
  { name: "Chrome", icon: <ChromeIcon />, open: true },
  { name: "Outlook", icon: <OutlookTile />, open: true, active: true },
  { name: "Word", icon: <OfficeTile letter="W" /> },
  { name: "PowerPoint", icon: <PowerPointIcon /> },
  { name: "Excel", icon: <OfficeTile letter="X" /> },
  { name: "Publisher", icon: <OfficeTile letter="P" /> },
  { name: "OneNote", icon: <OfficeTile letter="N" /> },
  { name: "Assistant", icon: <FigureIcon /> },
  { name: "Access client", icon: <RedAIcon /> },
  { name: "VirtualBox", icon: <BoxIcon />, open: true },
]

function Taskbar() {
  return (
    <footer className="flex items-center h-10 shrink-0 bg-linear-to-r from-[#263c45] via-[#243842] to-[#1d2947] text-white">
      <button aria-label="Start" className="flex items-center justify-center w-12 h-10">
        <svg width="16" height="16" viewBox="0 0 16 16" fill="#fff" aria-hidden="true">
          <path d="M0 2l7-1v6.500H0zM8 1l8-1v7.500H8zM0 8.500h7V15l-7-1zM8 8.500h8V16l-8-1z" />
        </svg>
      </button>
      <label className="flex items-center w-72 h-10 bg-[#f3f3f3] border border-[#c4c4c4] pl-3 pr-1 text-[#333]">
        <Search className="w-4 h-4 -scale-x-100 shrink-0" strokeWidth={1.500} />
        <input type="search" aria-label="Type here to search" placeholder="Type here to search" className="ml-3 w-36 min-w-0 flex-1 bg-transparent text-[14px] outline-none placeholder:text-[#333]" />
        <span className="flex items-center justify-center w-[71px] h-8 rounded-lg bg-[#e3e3e3]"><BriefcaseArt className="w-8 h-7" /></span>
      </label>
      <div className="flex">
        {pinned.map((app) => (
          <button key={app.name} aria-label={app.name} className={`relative flex items-center justify-center w-[49px] h-10 ${app.active ? "bg-[#536871]" : ""}`}>
            {app.icon}
            {app.open && <span className={`absolute bottom-0 h-0.5 bg-[#76b9ed] ${app.active ? "inset-x-0" : "inset-x-1"}`} />}
          </button>
        ))}
      </div>
      <div className="ml-auto flex items-center">
        <button className="flex items-center gap-2 text-[14px] whitespace-nowrap">
          <svg width="26" height="24" viewBox="0 0 26 24" aria-hidden="true">
            <path d="M6 23q-5 0-5-4t5-4q1-6 7-6 5 0 6 5 6 0 6 5 0 4-5 4z" fill="#bcd2f4" />
            <circle cx="18" cy="7" r="6" fill="#c42b1c" />
            <text x="18" y="10" textAnchor="middle" fontSize="8" fill="#fff" fontFamily="Noto Sans, sans-serif">1</text>
          </svg>
          <span>9°C</span>
          <span>Mostly cloudy</span>
        </button>
        <button aria-label="Show hidden icons" className="pl-6">
          <svg width="12" height="8" viewBox="0 0 12 8" fill="none" stroke="#fff" strokeWidth="1.300" aria-hidden="true"><path d="M0 7l6-6 6 6" /></svg>
        </button>
        <button aria-label="Network" className="pl-3">
          <svg width="14" height="14" viewBox="0 0 14 14" fill="none" stroke="#fff" strokeWidth="1.200" aria-hidden="true">
            <path d="M1 13Q1 2 13 1M4 13q0-8 9-9M7 13q0-5 6-6" />
            <circle cx="11.500" cy="11.500" r="1.500" fill="#fff" stroke="none" />
          </svg>
        </button>
        <button aria-label="Volume" className="pl-1.5">
          <svg width="17" height="14" viewBox="0 0 17 14" fill="none" stroke="#fff" strokeWidth="1.200" aria-hidden="true">
            <path d="M1 5h3l4-4v12L4 9H1zM10 5q1.500 2 0 4" />
            <path d="M12 3q3 4 0 8M14 1q4 6 0 12" stroke="#8b93a6" />
          </svg>
        </button>
        <button className="w-20 text-center text-[11px] leading-[18px]">
          11:25
          <br />
          24/02/2025
        </button>
        <button aria-label="Notifications" className="relative ml-1.5 mr-3.5 w-7 h-10">
          <svg width="16" height="16" viewBox="0 0 16 16" className="mb-1" aria-hidden="true">
            <path d="M0 0h16v12H7l-3 3v-3H0z" fill="#fff" />
            <path d="M3 3.500h10M3 6.500h10M3 9.500h6" stroke="#1d2947" strokeWidth="1.200" />
          </svg>
          <span className="absolute right-0.5 bottom-1 flex items-center justify-center w-5 h-4 rounded-full bg-[#3a3f48] ring-1 ring-[#8a8f98] text-[11px] font-semibold">25</span>
        </button>
      </div>
    </footer>
  )
}

export default function App() {
  return (
    <div className="flex flex-col h-screen overflow-hidden bg-[#eeeeee] font-['Noto_Sans',sans-serif]">
      <TitleBar />
      <Tabs />
      <Ribbon />
      <main className="flex flex-col flex-1 min-h-0 mt-[7px] mx-2 rounded-t-lg border border-b-0 border-[#d8d8d8] bg-white">
        <MessageHeader />
        <div className="flex flex-1 min-h-0 mt-2">
          <MessageBody />
          <ScrollBar />
        </div>
      </main>
      <Taskbar />
    </div>
  )
}
